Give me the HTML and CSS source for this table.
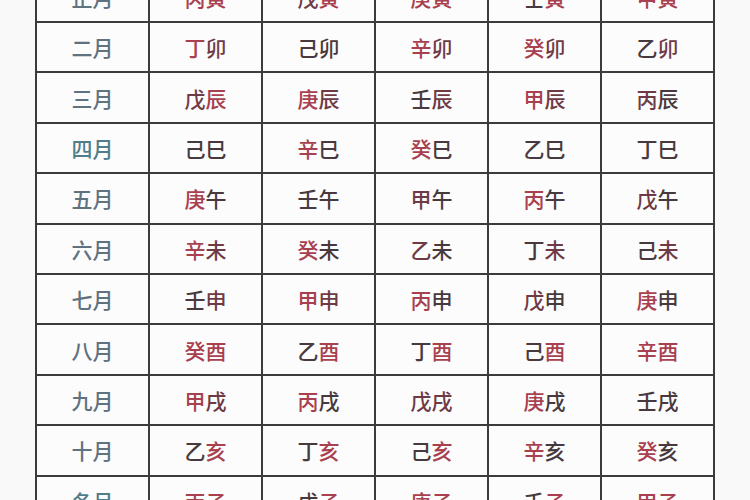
FILE: index.html
```html
<!DOCTYPE html>
<html lang="zh-CN">
<head>
<meta charset="utf-8">
<link rel="stylesheet" href="styles.css">
</head>
<body>
<div class="sheet">
  <div class="grid">
    <div class="cell m">正月</div>
    <div class="cell"><span class="r">丙</span><span class="r">寅</span></div>
    <div class="cell"><span class="q">戊</span><span class="r">寅</span></div>
    <div class="cell"><span class="r">庚</span><span class="r">寅</span></div>
    <div class="cell"><span class="d">壬</span><span class="r">寅</span></div>
    <div class="cell"><span class="r">甲</span><span class="r">寅</span></div>

    <div class="cell m">二月</div>
    <div class="cell"><span class="r">丁</span><span class="q">卯</span></div>
    <div class="cell"><span class="d">己</span><span class="d">卯</span></div>
    <div class="cell"><span class="r">辛</span><span class="q">卯</span></div>
    <div class="cell"><span class="r">癸</span><span class="q">卯</span></div>
    <div class="cell"><span class="d">乙</span><span class="q">卯</span></div>

    <div class="cell m">三月</div>
    <div class="cell"><span class="q">戊</span><span class="r">辰</span></div>
    <div class="cell"><span class="r">庚</span><span class="q">辰</span></div>
    <div class="cell"><span class="d">壬</span><span class="q">辰</span></div>
    <div class="cell"><span class="r">甲</span><span class="q">辰</span></div>
    <div class="cell"><span class="q">丙</span><span class="d">辰</span></div>

    <div class="cell m t">四月</div>
    <div class="cell"><span class="d">己</span><span class="d">巳</span></div>
    <div class="cell"><span class="r">辛</span><span class="d">巳</span></div>
    <div class="cell"><span class="r">癸</span><span class="d">巳</span></div>
    <div class="cell"><span class="d">乙</span><span class="d">巳</span></div>
    <div class="cell"><span class="d">丁</span><span class="d">巳</span></div>

    <div class="cell m">五月</div>
    <div class="cell"><span class="r">庚</span><span class="d">午</span></div>
    <div class="cell"><span class="d">壬</span><span class="d">午</span></div>
    <div class="cell"><span class="q">甲</span><span class="d">午</span></div>
    <div class="cell"><span class="r">丙</span><span class="d">午</span></div>
    <div class="cell"><span class="q">戊</span><span class="d">午</span></div>

    <div class="cell m">六月</div>
    <div class="cell"><span class="r">辛</span><span class="q">未</span></div>
    <div class="cell"><span class="r">癸</span><span class="d">未</span></div>
    <div class="cell"><span class="q">乙</span><span class="d">未</span></div>
    <div class="cell"><span class="d">丁</span><span class="q">未</span></div>
    <div class="cell"><span class="d">己</span><span class="q">未</span></div>

    <div class="cell m">七月</div>
    <div class="cell"><span class="d">壬</span><span class="q">申</span></div>
    <div class="cell"><span class="r">甲</span><span class="q">申</span></div>
    <div class="cell"><span class="r">丙</span><span class="d">申</span></div>
    <div class="cell"><span class="q">戊</span><span class="d">申</span></div>
    <div class="cell"><span class="r">庚</span><span class="d">申</span></div>

    <div class="cell m">八月</div>
    <div class="cell"><span class="r">癸</span><span class="r">酉</span></div>
    <div class="cell"><span class="d">乙</span><span class="r">酉</span></div>
    <div class="cell"><span class="d">丁</span><span class="r">酉</span></div>
    <div class="cell"><span class="d">己</span><span class="r">酉</span></div>
    <div class="cell"><span class="r">辛</span><span class="r">酉</span></div>

    <div class="cell m">九月</div>
    <div class="cell"><span class="r">甲</span><span class="q">戌</span></div>
    <div class="cell"><span class="r">丙</span><span class="d">戌</span></div>
    <div class="cell"><span class="q">戊</span><span class="q">戌</span></div>
    <div class="cell"><span class="r">庚</span><span class="d">戌</span></div>
    <div class="cell"><span class="d">壬</span><span class="d">戌</span></div>

    <div class="cell m">十月</div>
    <div class="cell"><span class="d">乙</span><span class="r">亥</span></div>
    <div class="cell"><span class="d">丁</span><span class="r">亥</span></div>
    <div class="cell"><span class="d">己</span><span class="r">亥</span></div>
    <div class="cell"><span class="r">辛</span><span class="d">亥</span></div>
    <div class="cell"><span class="r">癸</span><span class="d">亥</span></div>

    <div class="cell m t">冬月</div>
    <div class="cell"><span class="r">丙</span><span class="r">子</span></div>
    <div class="cell"><span class="d">戊</span><span class="r">子</span></div>
    <div class="cell"><span class="r">庚</span><span class="r">子</span></div>
    <div class="cell"><span class="d">壬</span><span class="r">子</span></div>
    <div class="cell"><span class="r">甲</span><span class="r">子</span></div>
  </div>
</div>
</body>
</html>
```

FILE: styles.css
```css
html, body {
  margin: 0;
  padding: 0;
  background: #f9f9f9;
  overflow: hidden;
  height: 500px;
}

.sheet {
  padding-left: 35px;
}

.grid {
  display: grid;
  grid-template-columns: repeat(6, 111px);
  grid-auto-rows: 48.4px;
  gap: 2px;
  padding: 2px;
  width: max-content;
  margin-top: -29.4px;
  background: #3b3b3b;
}

.cell {
  background: #fcfcfc;
  display: flex;
  align-items: center;
  justify-content: center;
  font-family: "Noto Sans CJK SC", "Noto Sans CJK TC", sans-serif;
  font-size: 21px;
  font-weight: 500;
  letter-spacing: 0;
  line-height: 1;
  padding-top: 1px;
}

.m {
  color: #5f7280;
}

.t {
  color: #4f7e8a;
}

.r {
  color: #a8404f;
}

.q {
  color: #6e3a45;
}

.d {
  color: #47393d;
}
```
